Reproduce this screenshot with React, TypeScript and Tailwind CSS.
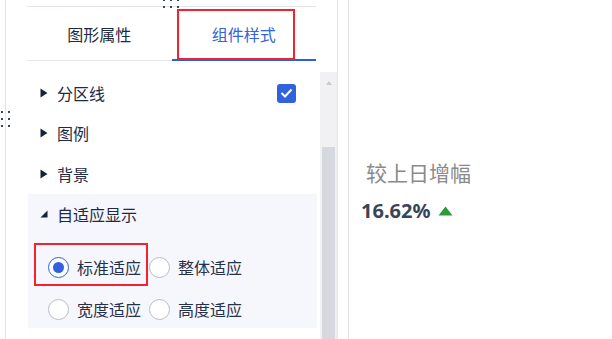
import React from "react";

const cjk = { fontFamily: '"Noto Sans CJK SC", "Noto Sans", sans-serif' };

function Caret({ open }: { open?: boolean }) {
  if (open) {
    return (
      <svg width="8" height="8" viewBox="0 0 8 8" className="shrink-0">
        <polygon points="0.5,7.5 7.5,7.5 7.5,0.5" fill="#16213a" />
      </svg>
    );
  }
  return (
    <svg width="8" height="10" viewBox="0 0 8 10" className="shrink-0">
      <polygon points="0.5,0.5 7.5,5 0.5,9.5" fill="#16213a" />
    </svg>
  );
}

function Radio({ checked, label }: { checked?: boolean; label: string }) {
  return (
    <div className="flex items-center h-[22px]">
      <div
        className={
          "w-[21px] h-[21px] rounded-full border flex items-center justify-center bg-white " +
          (checked ? "border-[#2f62dc]" : "border-[#b8bcc8]")
        }
      >
        {checked && <div className="w-[11px] h-[11px] rounded-full bg-[#2f62dc]" />}
      </div>
      <span className="ml-[8px] text-[16px] leading-none text-[#26314a]">{label}</span>
    </div>
  );
}

function Dots({ cols, rows }: { cols: number; rows: number }) {
  return (
    <div className="grid gap-x-[5px] gap-y-[5px]" style={{ gridTemplateColumns: `repeat(${cols}, 2px)` }}>
      {Array.from({ length: cols * rows }).map((_, i) => (
        <div key={i} className="w-[2px] h-[2px] bg-[#3a4558]" />
      ))}
    </div>
  );
}

export default function App() {
  return (
    <div className="relative w-[612px] h-[339px] bg-white overflow-hidden flex" style={cjk}>
      {/* left panel */}
      <div className="ml-[5px] w-[333px] h-full border-l border-r border-[#e3e4ee] flex flex-col pt-[6px]">
        {/* tabs */}
        <div className="ml-[21px] w-[289px] h-[55px] border-t border-b border-[#e3e4ee] flex">
          <div className="flex-1 flex items-center justify-center text-[16px] text-[#1f2a3d]">图形属性</div>
          <div className="relative flex-1 flex items-center justify-center text-[16px] text-[#3563d8]">
            组件样式
            <div className="absolute left-0 right-0 bottom-[-1px] h-[2px] bg-[#2f5fd8]" />
          </div>
        </div>
        <div className="flex flex-1 min-h-0">
          <div className="ml-[22px] w-[290px] pt-[12px] flex flex-col">
            <div className="h-[40px] flex items-center pl-[12px] pr-[21px]">
              <Caret />
              <span className="ml-[9px] text-[16px] text-[#1f2a44]">分区线</span>
              <div className="ml-auto w-[19px] h-[19px] rounded-[3px] bg-[#2f62dc] flex items-center justify-center">
                <svg width="13" height="10" viewBox="0 0 13 10">
                  <polyline points="1.5,5 5,8.5 11.5,1.5" fill="none" stroke="#fff" strokeWidth="2" />
                </svg>
              </div>
            </div>
            <div className="h-[40px] flex items-center pl-[12px]">
              <Caret />
              <span className="ml-[9px] text-[16px] text-[#1f2a44]">图例</span>
            </div>
            <div className="h-[41px] flex items-center pl-[12px]">
              <Caret />
              <span className="ml-[9px] text-[16px] text-[#1f2a44]">背景</span>
            </div>
            <div className="bg-[#f6f7fc] pb-[8px]">
              <div className="h-[40px] flex items-center pl-[12px]">
                <Caret open />
                <span className="ml-[9px] text-[16px] text-[#1f2a44]">自适应显示</span>
              </div>
              <div className="pl-[20px] pt-[22px] flex flex-col gap-[20px]">
                <div className="flex gap-[8px]">
                  <Radio checked label="标准适应" />
                  <Radio label="整体适应" />
                </div>
                <div className="flex gap-[8px]">
                  <Radio label="宽度适应" />
                  <Radio label="高度适应" />
                </div>
              </div>
            </div>
          </div>
          {/* scrollbar */}
          <div className="ml-[3px] mt-[11px] w-[17px] bg-[#f1f1f4] flex flex-col items-center">
            <svg width="8" height="6" viewBox="0 0 8 6" className="mt-[8px]">
              <polygon points="4,1 7,5 1,5" fill="#c8cad0" />
            </svg>
            <div className="mt-[61px] w-[13px] flex-1 bg-[#d5d8de]" />
          </div>
        </div>
      </div>
      {/* divider */}
      <div className="ml-[10px] w-px h-full bg-[#e3e4ee]" />
      {/* right content */}
      <div className="flex flex-col pl-[12px] pt-[158px]">
        <div className="ml-[5px] text-[21px] leading-[28px] text-[#8a8a8a]">较上日增幅</div>
        <div className="mt-[12px] flex items-center">
          <span className="text-[20px] leading-[26px] font-bold text-[#3b4457]" style={{ fontFamily: '"Noto Sans", sans-serif' }}>
            16.62%
          </span>
          <svg width="15" height="10" viewBox="0 0 15 10" className="ml-[8px]">
            <polygon points="7.5,0.5 14.5,9.5 0.5,9.5" fill="#2a9a3a" />
          </svg>
        </div>
      </div>

      {/* overlays: drag handles */}
      <div className="absolute left-[163px] top-[-1px]">
        <Dots cols={3} rows={2} />
      </div>
      <div className="absolute left-[1px] top-[111px]">
        <Dots cols={2} rows={3} />
      </div>

      {/* overlays: red annotation boxes */}
      <div className="absolute left-[177px] top-[9px] w-[118px] h-[51px] border-2 border-[#f0232f]" />
      <div className="absolute left-[34px] top-[243px] w-[114px] h-[43px] border-2 border-[#f0232f]" />
    </div>
  );
}
